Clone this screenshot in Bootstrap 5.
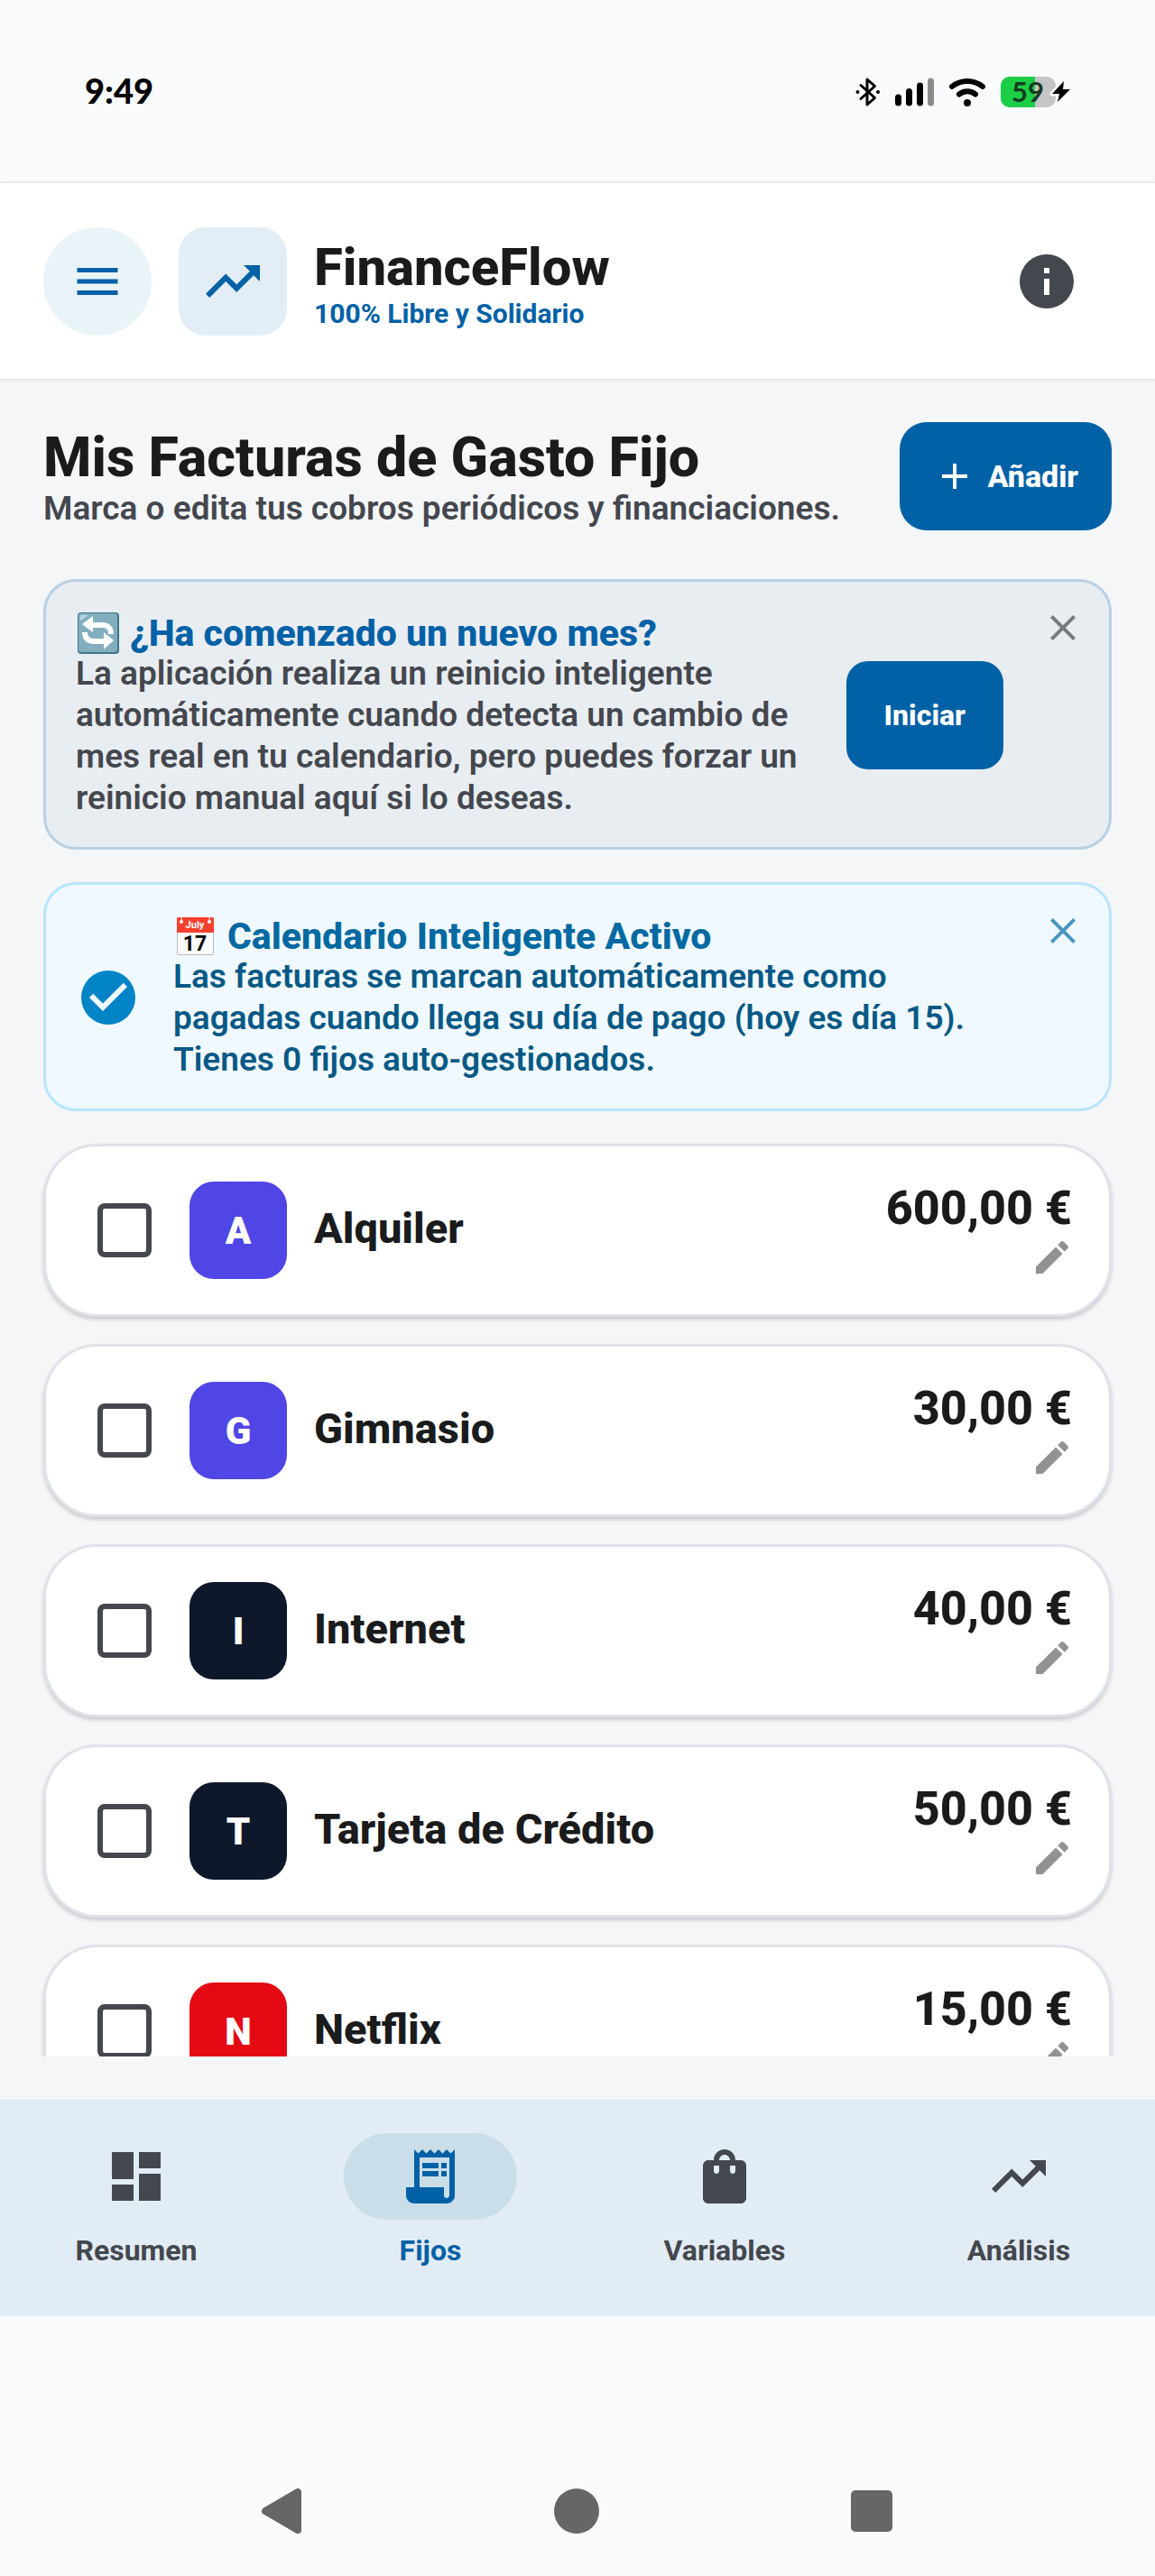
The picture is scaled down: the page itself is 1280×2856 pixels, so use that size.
<!DOCTYPE html>
<html lang="es">
<head>
<meta charset="utf-8">
<meta name="viewport" content="width=device-width, initial-scale=1">
<title>FinanceFlow</title>
<link href="https://cdn.jsdelivr.net/npm/bootstrap@5.3.0/dist/css/bootstrap.min.css" rel="stylesheet">
<style>
  :root { --ff-blue: #0061a6; --ff-ink: #1a1b1c; --ff-grey: #44474e; }
  body { font-family: Roboto, "Liberation Sans", sans-serif; color: var(--ff-ink); background: #f8fafc; }
  svg { display: block; flex: none; }
  .shell { height: 100vh; }
  .statusbar { height: 203px; padding: 0 93px 0 94px; color: #000; }
  .clock { font: 900 38px/46px Lato, sans-serif; padding-bottom: 3px; }
  .status-icons { gap: 16px; }
  .topbar { height: 217px; padding: 0 78px 0 48px; background: #fff; box-shadow: 0 0 4px rgba(0,0,0,.22); z-index: 1; }
  .topbar-left { gap: 30px; }
  .tile { width: 120px; height: 120px; border: 0; padding: 0; color: var(--ff-blue); }
  .tile-menu { background: #eaf3f7; border-radius: 50%; }
  .tile-logo { background: #e3edf5; border-radius: 30px; }
  .brand-name { font-size: 58px; line-height: 72px; font-weight: 800; margin: 0; }
  .brand-tag { font-size: 30px; line-height: 32px; font-weight: 700; color: var(--ff-blue); margin: 0; }
  .plain { background: none; border: 0; padding: 0; }
  .page { background: #f4f6f8; min-height: 0; padding: 48px 0; }
  .page-head { padding: 0 48px 54px; }
  .page-title { font-size: 61px; line-height: 72px; font-weight: 800; margin: 0; }
  .page-sub { font-size: 37px; line-height: 42px; font-weight: 600; color: var(--ff-grey); margin: 0; }
  .btn-ff { --bs-btn-color: #fff; --bs-btn-bg: var(--ff-blue); --bs-btn-hover-color: #fff; --bs-btn-hover-bg: #00508a; height: 120px; border: 0; border-radius: 30px; font-size: 34px; line-height: 40px; font-weight: 800; flex: none; }
  .btn-add { padding: 0 37px; gap: 12px; }
  .btn-start { padding: 0 42px; border-radius: 24px; font-size: 32px; }
  .scroller { min-height: 0; overflow-y: auto; scrollbar-width: none; padding: 0 48px; }
  .scroller::-webkit-scrollbar { display: none; }
  .notice { border: 3px solid; border-radius: 36px; margin-bottom: 36px; }
  .notice-reset { background: #e8edf1; border-color: #b9d0e3; }
  .notice-cal { background: #f0f9ff; border-color: #b9e5fd; }
  .notice-main { padding: 33px 15px 31px 33px; gap: 30px; }
  .notice-copy { padding-top: 2px; }
  .notice-title { font-size: 41px; line-height: 44px; font-weight: 800; color: var(--ff-blue); margin: 0; gap: 12px; }
  .notice-text { font-size: 37px; line-height: 46px; font-weight: 600; color: var(--ff-grey); margin: 0 -12px 0 0; }
  .notice-cal .notice-title { color: #0369a1; }
  .notice-cal .notice-text { color: #075985; }
  .emoji { margin: -3px 0 -3px 2px; }
  .notice-close { width: 72px; height: 72px; margin: 15px; color: #777b80; flex: none; }
  .notice-cal .notice-close { color: #4a96c1; }
  .bill { height: 192px; flex: none; background: #fff; border: 3px solid #e0e2ea; border-radius: 60px; padding: 0 39px 0 57px; margin-bottom: 30px; box-shadow: 0 3px 4px rgba(0,0,0,.18); }
  .bill .form-check-input { width: 60px; height: 60px; margin: 0 42px 0 0; border: 6px solid var(--ff-grey); border-radius: 8px; background-color: transparent; flex: none; }
  .bill .form-check-input:checked { background-color: var(--ff-blue); border-color: var(--ff-blue); }
  .initial { width: 108px; height: 108px; border-radius: 27px; color: #fff; font-size: 42px; font-weight: 900; margin-right: 30px; flex: none; }
  .indigo { background: #4f46e5; } .navy { background: #0f172a; } .red { background: #e50914; }
  .bill-name { font-size: 47px; line-height: 54px; font-weight: 800; padding-bottom: 5px; }
  .bill-amount { font-size: 52px; line-height: 60px; font-weight: 800; padding-right: 2px; }
  .bill-edit { color: #929295; }
  .tabs-bar { height: 240px; background: #e1ecf4; gap: 24px; padding-top: 37px; }
  .tab-link { color: var(--ff-grey); text-decoration: none; font-size: 32px; line-height: 36px; font-weight: 700; gap: 16px; flex: 1 1 0; }
  .tab-link.active { color: var(--ff-blue); }
  .pill { width: 192px; height: 96px; border-radius: 48px; }
  .active .pill { background: #cadeea; }
  .sysnav { height: 288px; padding: 144px 288px 0 286px; color: #666; }
</style>
</head>
<body>
<svg width="0" height="0" class="position-absolute" aria-hidden="true">
  <symbol id="trend" viewBox="0 0 24 24"><path fill="currentColor" d="M16 6l2.29 2.29-4.88 4.88-4-4L2 16.59 3.41 18l6-6 4 4 6.3-6.29L22 12V6z"/></symbol>
  <symbol id="close" viewBox="0 0 24 24"><path fill="currentColor" d="M19 6.41L17.59 5 12 10.59 6.41 5 5 6.41 10.59 12 5 17.59 6.41 19 12 13.41 17.59 19 19 17.59 13.41 12z"/></symbol>
  <symbol id="pencil" viewBox="0 0 24 24"><path fill="currentColor" d="M3 17.25V21h3.75L17.81 9.94l-3.75-3.75L3 17.25zM20.71 7.04a1 1 0 0 0 0-1.41l-2.34-2.34a1 1 0 0 0-1.41 0l-1.83 1.83 3.75 3.75 1.83-1.83z"/></symbol>
</svg>
<div class="shell d-flex flex-column">
  <div class="statusbar d-flex align-items-center justify-content-between flex-shrink-0">
    <span class="clock">9:49</span>
    <div class="status-icons d-flex align-items-center">
      <svg width="28" height="34" viewBox="0 0 28 34" fill="none" stroke="#000" stroke-width="3" stroke-linejoin="round" stroke-linecap="round"><path d="M6 9.500l15.500 14L13 31V3l8.500 7.500L6 24.500"/><circle cx="2.500" cy="17" r="1" stroke-width="2"/><circle cx="25" cy="17" r="1" stroke-width="2"/></svg>
      <svg width="43" height="32" viewBox="0 0 43 32" stroke="#000" stroke-width="7" stroke-linecap="round"><path d="M3.500 22v6M15.500 15.500v12.500M27.500 9v19"/><path d="M39.500 4v24" stroke="#8b8b8b"/></svg>
      <svg width="42" height="32" viewBox="0 0 42 32" fill="none" stroke="#000" stroke-width="6" stroke-linecap="round"><path d="M4 10C14 2 28 2 38 10M12 18.500c5-4.500 13-4.500 18 0"/><circle cx="21" cy="28" r="4" fill="#000" stroke="none"/></svg>
      <svg width="78" height="50" viewBox="0 -8 78 50"><rect width="61" height="34" rx="10" fill="#c5c5c6"/><path d="M38 0H10A10 10 0 0 0 0 10v14a10 10 0 0 0 10 10h28z" fill="#1bce46"/><text x="30" y="28" text-anchor="middle" font-family="Lato, sans-serif" font-size="31" font-weight="700" fill="#173a20">59</text><path d="M70 5L57 19h8l-2 9 14-14h-8z" fill="#000" stroke="#f8fafc" stroke-width="5" paint-order="stroke" stroke-linejoin="round"/></svg>
    </div>
  </div>

  <header class="topbar d-flex align-items-center justify-content-between flex-shrink-0 position-relative">
    <div class="topbar-left d-flex align-items-center">
      <button class="tile tile-menu d-flex align-items-center justify-content-center" type="button" aria-label="Menú">
        <svg width="60" height="60" viewBox="0 0 24 24" fill="currentColor"><path d="M3 18h18v-2H3v2zm0-5h18v-2H3v2zm0-7v2h18V6H3z"/></svg>
      </button>
      <div class="tile tile-logo d-flex align-items-center justify-content-center"><svg width="72" height="72"><use href="#trend"/></svg></div>
      <div>
        <h1 class="brand-name">FinanceFlow</h1>
        <p class="brand-tag">100% Libre y Solidario</p>
      </div>
    </div>
    <button class="plain" type="button" aria-label="Información"><svg width="84" height="72" viewBox="0 0 28 24" fill="#44474e"><path d="M14 2a10 10 0 1 0 0 20 10 10 0 0 0 0-20zm1 15h-2v-6h2v6zm0-8h-2V7h2v2z"/></svg></button>
  </header>

  <main class="page d-flex flex-column flex-grow-1">
    <div class="page-head d-flex align-items-center justify-content-between flex-shrink-0">
      <div>
        <h2 class="page-title">Mis Facturas de Gasto Fijo</h2>
        <p class="page-sub">Marca o edita tus cobros periódicos y financiaciones.</p>
      </div>
      <button class="btn btn-ff btn-add d-flex align-items-center" type="button">
        <svg width="48" height="48" viewBox="0 0 24 24" fill="currentColor"><path d="M19 13h-6v6h-2v-6H5v-2h6V5h2v6h6z"/></svg>
        Añadir
      </button>
    </div>

    <div class="scroller d-flex flex-column">
      <section class="notice notice-reset d-flex flex-shrink-0">
        <div class="notice-main d-flex align-items-center flex-grow-1">
          <div class="notice-copy flex-grow-1">
            <h3 class="notice-title d-flex align-items-center">
              <svg class="emoji" width="46" height="46" viewBox="0 0 46 46"><rect width="46" height="46" rx="4" fill="#427687"/><rect x="1" y="1" width="43" height="43" rx="3" fill="#82aec0"/><path d="M3 9V5a2 2 0 0 1 2-2h7z" fill="#b7d7e4"/><path fill="#fff" d="M17 4v7h11c7 0 12 5 12 13h-6c0-5-2-7-6-7H17v5L5 13zM29 41v-6H18C10 35 5 30 5 22h6c0 5 3 7 7 7h11v-7l11 9z"/></svg>
              <span>¿Ha comenzado un nuevo mes?</span>
            </h3>
            <p class="notice-text">La aplicación realiza un reinicio inteligente automáticamente cuando detecta un cambio de mes real en tu calendario, pero puedes forzar un reinicio manual aquí si lo deseas.</p>
          </div>
          <button class="btn btn-ff btn-start" type="button">Iniciar</button>
        </div>
        <button class="notice-close plain d-flex align-items-center justify-content-center" type="button" aria-label="Cerrar"><svg width="48" height="48"><use href="#close"/></svg></button>
      </section>

      <section class="notice notice-cal d-flex flex-shrink-0">
        <div class="notice-main d-flex align-items-center flex-grow-1">
          <svg width="78" height="72" viewBox="0 0 26 24"><circle cx="12" cy="12" r="10" fill="#0284c7"/><path fill="#f0f9ff" d="M10 17l-5-5 1.410-1.410L10 14.170l7.590-7.590L19 8z"/></svg>
          <div class="notice-copy flex-grow-1">
            <h3 class="notice-title d-flex align-items-center">
              <svg class="emoji" width="46" height="46" viewBox="0 0 46 46"><rect x="2" y="2" width="41" height="42" rx="2" fill="#b9bcbf"/><rect x="3" y="3" width="39" height="40" rx="1" fill="#fafafa"/><path d="M2 19V4a2 2 0 0 1 2-2h37a2 2 0 0 1 2 2v15z" fill="#f8402f"/><path d="M7 1v5M38 1v5" stroke="#fff" stroke-width="1"/><circle cx="7" cy="7" r="2" fill="#fff"/><circle cx="38" cy="7" r="2" fill="#fff"/><text x="22" y="14" text-anchor="middle" font-size="11" font-weight="700" fill="#fff">July</text><text x="22" y="39" text-anchor="middle" font-size="23" font-weight="700" fill="#000">17</text></svg>
              <span>Calendario Inteligente Activo</span>
            </h3>
            <p class="notice-text">Las facturas se marcan automáticamente como pagadas cuando llega su día de pago (hoy es día 15). Tienes 0 fijos auto-gestionados.</p>
          </div>
        </div>
        <button class="notice-close plain d-flex align-items-center justify-content-center" type="button" aria-label="Cerrar"><svg width="48" height="48"><use href="#close"/></svg></button>
      </section>

      <div class="bill d-flex align-items-center">
        <input class="form-check-input" type="checkbox" id="b1">
        <span class="initial indigo d-flex align-items-center justify-content-center">A</span>
        <label class="bill-name flex-grow-1" for="b1">Alquiler</label>
        <div class="d-flex flex-column align-items-end"><span class="bill-amount">600,00 €</span><button class="plain bill-edit" type="button" aria-label="Editar Alquiler"><svg width="48" height="48"><use href="#pencil"/></svg></button></div>
      </div>
      <div class="bill d-flex align-items-center">
        <input class="form-check-input" type="checkbox" id="b2">
        <span class="initial indigo d-flex align-items-center justify-content-center">G</span>
        <label class="bill-name flex-grow-1" for="b2">Gimnasio</label>
        <div class="d-flex flex-column align-items-end"><span class="bill-amount">30,00 €</span><button class="plain bill-edit" type="button" aria-label="Editar Gimnasio"><svg width="48" height="48"><use href="#pencil"/></svg></button></div>
      </div>
      <div class="bill d-flex align-items-center">
        <input class="form-check-input" type="checkbox" id="b3">
        <span class="initial navy d-flex align-items-center justify-content-center">I</span>
        <label class="bill-name flex-grow-1" for="b3">Internet</label>
        <div class="d-flex flex-column align-items-end"><span class="bill-amount">40,00 €</span><button class="plain bill-edit" type="button" aria-label="Editar Internet"><svg width="48" height="48"><use href="#pencil"/></svg></button></div>
      </div>
      <div class="bill d-flex align-items-center">
        <input class="form-check-input" type="checkbox" id="b4">
        <span class="initial navy d-flex align-items-center justify-content-center">T</span>
        <label class="bill-name flex-grow-1" for="b4">Tarjeta de Crédito</label>
        <div class="d-flex flex-column align-items-end"><span class="bill-amount">50,00 €</span><button class="plain bill-edit" type="button" aria-label="Editar Tarjeta de Crédito"><svg width="48" height="48"><use href="#pencil"/></svg></button></div>
      </div>
      <div class="bill d-flex align-items-center">
        <input class="form-check-input" type="checkbox" id="b5">
        <span class="initial red d-flex align-items-center justify-content-center">N</span>
        <label class="bill-name flex-grow-1" for="b5">Netflix</label>
        <div class="d-flex flex-column align-items-end"><span class="bill-amount">15,00 €</span><button class="plain bill-edit" type="button" aria-label="Editar Netflix"><svg width="48" height="48"><use href="#pencil"/></svg></button></div>
      </div>
    </div>
  </main>

  <nav class="tabs-bar d-flex align-items-start flex-shrink-0">
    <a class="tab-link d-flex flex-column align-items-center" href="#resumen"><span class="pill d-flex align-items-center justify-content-center"><svg width="72" height="72" viewBox="0 0 24 24" fill="currentColor"><path d="M3 13h8V3H3v10zm0 8h8v-6H3v6zm10 0h8V11h-8v10zm0-18v6h8V3h-8z"/></svg></span>Resumen</a>
    <a class="tab-link active d-flex flex-column align-items-center" href="#fijos" aria-current="page"><span class="pill d-flex align-items-center justify-content-center"><svg width="72" height="72" viewBox="0 0 24 24" fill="currentColor"><path d="M19.500 3.500L18 2l-1.500 1.500L15 2l-1.500 1.500L12 2l-1.500 1.500L9 2 7.500 3.500 6 2v14H3v3c0 1.660 1.340 3 3 3h12c1.660 0 3-1.340 3-3V2l-1.500 1.500zM19 19c0 .55-.45 1-1 1s-1-.45-1-1v-3H8V5h11v14z"/><path d="M9 7h6v2H9zM16 7h2v2h-2zM9 10h6v2H9zM16 10h2v2h-2z"/></svg></span>Fijos</a>
    <a class="tab-link d-flex flex-column align-items-center" href="#variables"><span class="pill d-flex align-items-center justify-content-center"><svg width="72" height="72" viewBox="0 0 24 24" fill="currentColor"><path d="M18 6h-2c0-2.210-1.790-4-4-4S8 3.790 8 6H6c-1.100 0-2 .9-2 2v12c0 1.100.9 2 2 2h12c1.100 0 2-.9 2-2V8c0-1.100-.9-2-2-2zm-8 4c0 .55-.45 1-1 1s-1-.45-1-1V8h2v2zm2-6c1.100 0 2 .9 2 2h-4c0-1.100.9-2 2-2zm4 6c0 .55-.45 1-1 1s-1-.45-1-1V8h2v2z"/></svg></span>Variables</a>
    <a class="tab-link d-flex flex-column align-items-center" href="#analisis"><span class="pill d-flex align-items-center justify-content-center"><svg width="72" height="72"><use href="#trend"/></svg></span>Análisis</a>
  </nav>

  <div class="sysnav d-flex justify-content-between flex-shrink-0">
    <button class="plain d-flex align-items-center" type="button" aria-label="Atrás"><svg width="52" height="144" viewBox="0 0 52 144" fill="#666" stroke="#666" stroke-width="8" stroke-linejoin="round"><path d="M44 51v42L8 72z"/></svg></button>
    <button class="plain d-flex align-items-center" type="button" aria-label="Inicio"><svg width="52" height="144" viewBox="0 0 52 144"><circle cx="26" cy="72" r="25" fill="#666"/></svg></button>
    <button class="plain d-flex align-items-center" type="button" aria-label="Recientes"><svg width="52" height="144" viewBox="0 0 52 144"><rect x="3" y="49" width="46" height="46" rx="5" fill="#666"/></svg></button>
  </div>
</div>
<script src="https://cdn.jsdelivr.net/npm/bootstrap@5.3.0/dist/js/bootstrap.bundle.min.js"></script>
</body>
</html>
